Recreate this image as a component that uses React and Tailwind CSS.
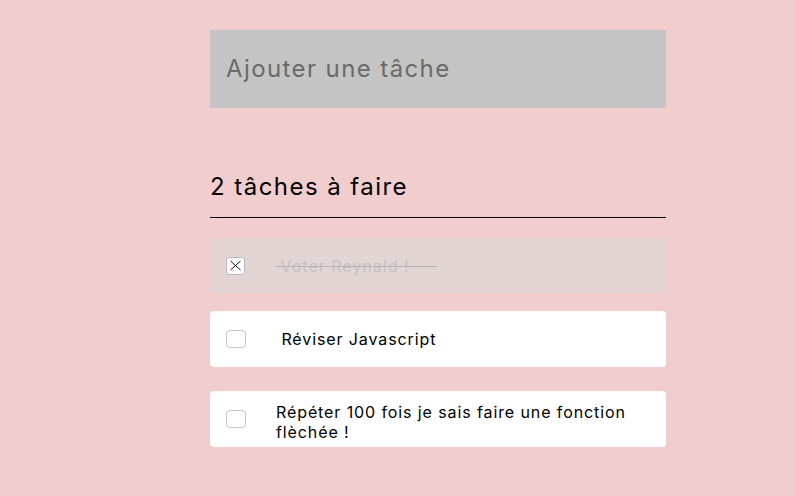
export default function App() {
  const font = { fontFamily: "Inter, 'Noto Sans', sans-serif" };
  return (
    <div className="min-h-[496px] w-full bg-[#f2cdce]" style={font}>
      <div className="ml-[210px] w-[456px] pt-[30px]">
        <div className="flex h-[78px] items-center bg-[#c4c4c4] pl-4">
          <input
            className="w-full bg-transparent text-[24px] tracking-[1.4px] text-black outline-none placeholder:text-[#6a6a6a]"
            placeholder="Ajouter une tâche"
          />
        </div>
        <h2 className="mt-[64px] pb-[16px] text-[24px] leading-[29px] tracking-[1.45px] text-black border-b border-black">
          2 tâches à faire
        </h2>
        <div className="mt-[20px] flex h-[55px] items-center rounded-[4px] bg-[#e4d5d5] pl-[16px]">
          <span className="flex h-[18px] w-[19px] items-center justify-center rounded-[3px] border border-[#b9b9b9] bg-white">
            <svg width="13" height="11" viewBox="0 0 13 11">
              <path d="M1.5 1 L11.5 10 M11.5 1 L1.5 10" stroke="#111" strokeWidth="1" fill="none" />
            </svg>
          </span>
          <span className="ml-[30px] text-[16px] tracking-[1px] text-[#c2c2c2] line-through decoration-[#b5b5b5]">
            {"\u00a0Voter Reynald !\u00a0\u00a0\u00a0\u00a0\u00a0"}
          </span>
        </div>
        <div className="mt-[18px] flex h-[56px] items-center rounded-[4px] bg-white pl-[16px]">
          <span className="h-[18px] w-[20px] rounded-[4px] border border-[#c4c4c4] bg-white" />
          <span className="ml-[30px] text-[16px] tracking-[0.9px] text-black">
            {"\u00a0Réviser Javascript"}
          </span>
        </div>
        <div className="mt-[24px] flex h-[56px] items-center rounded-[4px] bg-white pl-[16px]">
          <span className="h-[18px] w-[20px] shrink-0 rounded-[4px] border border-[#c4c4c4] bg-white" />
          <span className="ml-[30px] mt-[6px] w-[380px] text-[16px] leading-[20px] tracking-[0.9px] text-black">
            Répéter 100 fois je sais faire une fonction flèchée !
          </span>
        </div>
      </div>
    </div>
  );
}
